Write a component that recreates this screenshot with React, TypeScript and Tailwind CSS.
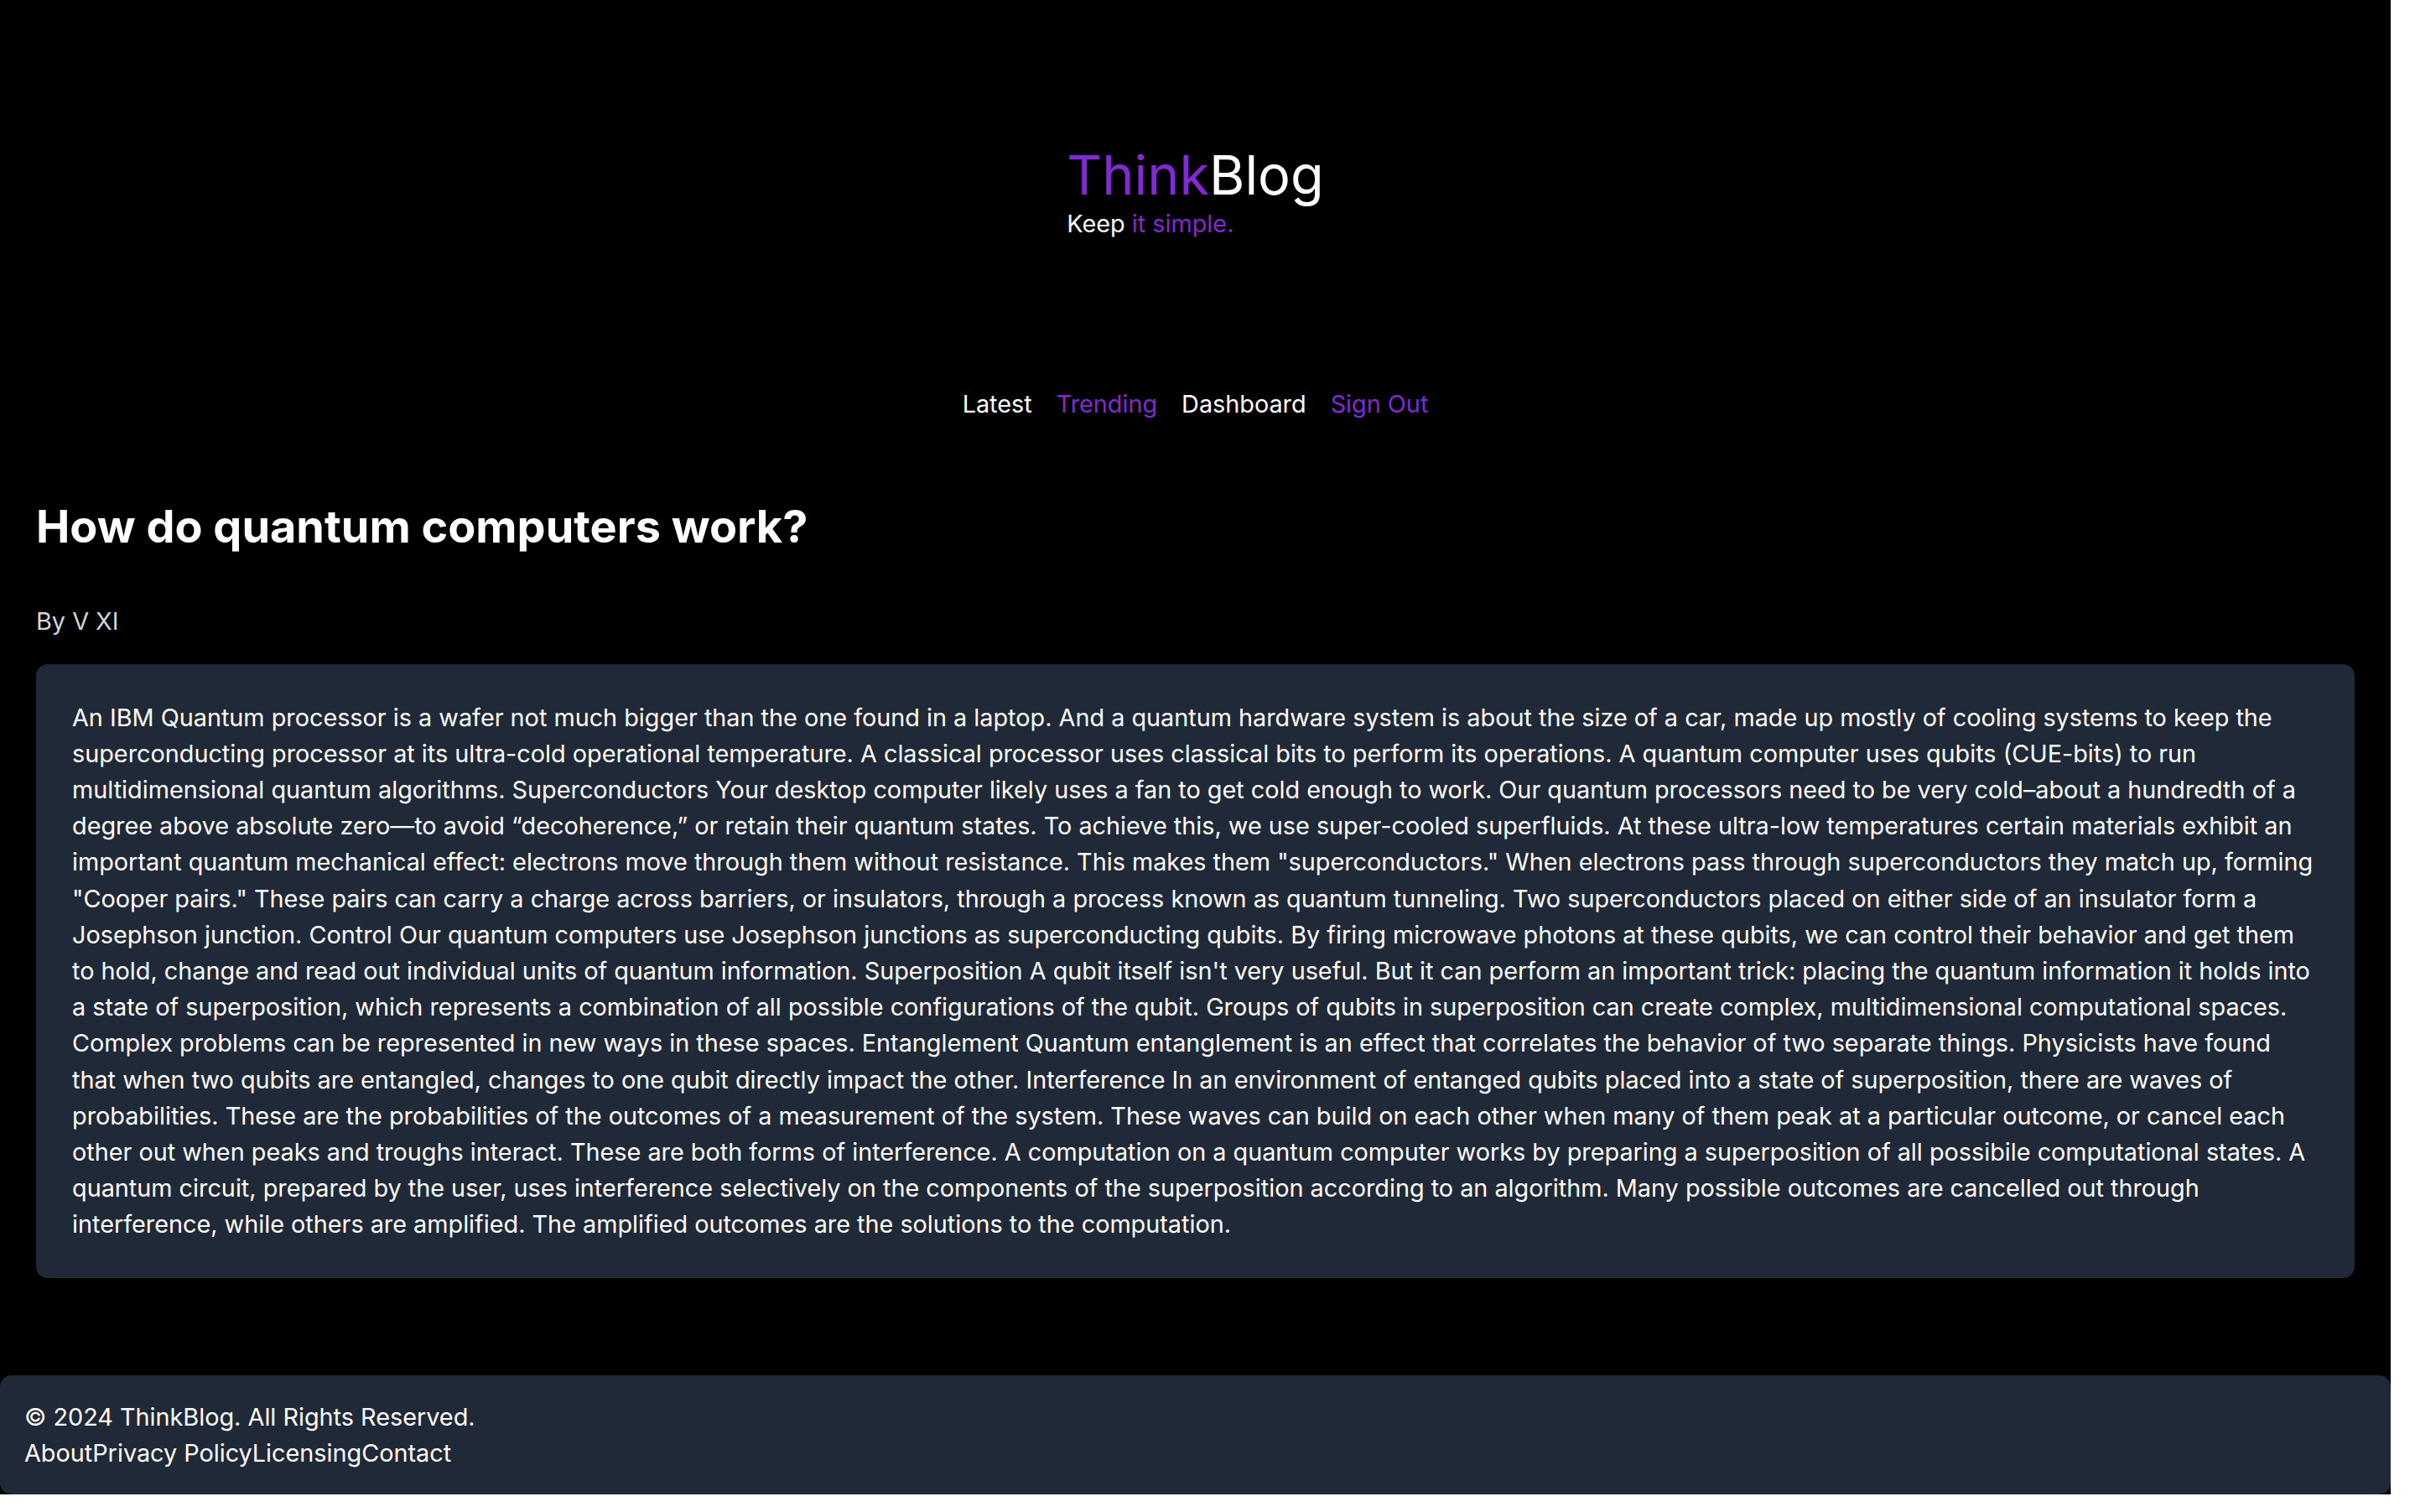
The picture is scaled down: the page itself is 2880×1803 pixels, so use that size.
const ARTICLE = `An IBM Quantum processor is a wafer not much bigger than the one found in a laptop. And a quantum hardware system is about the size of a car, made up mostly of cooling systems to keep the superconducting processor at its ultra-cold operational temperature. A classical processor uses classical bits to perform its operations. A quantum computer uses qubits (CUE-bits) to run multidimensional quantum algorithms. Superconductors Your desktop computer likely uses a fan to get cold enough to work. Our quantum processors need to be very cold–about a hundredth of a degree above absolute zero—to avoid “decoherence,” or retain their quantum states. To achieve this, we use super-cooled superfluids. At these ultra-low temperatures certain materials exhibit an important quantum mechanical effect: electrons move through them without resistance. This makes them "superconductors." When electrons pass through superconductors they match up, forming "Cooper pairs." These pairs can carry a charge across barriers, or insulators, through a process known as quantum tunneling. Two superconductors placed on either side of an insulator form a Josephson junction. Control Our quantum computers use Josephson junctions as superconducting qubits. By firing microwave photons at these qubits, we can control their behavior and get them to hold, change and read out individual units of quantum information. Superposition A qubit itself isn't very useful. But it can perform an important trick: placing the quantum information it holds into a state of superposition, which represents a combination of all possible configurations of the qubit. Groups of qubits in superposition can create complex, multidimensional computational spaces. Complex problems can be represented in new ways in these spaces. Entanglement Quantum entanglement is an effect that correlates the behavior of two separate things. Physicists have found that when two qubits are entangled, changes to one qubit directly impact the other. Interference In an environment of entanged qubits placed into a state of superposition, there are waves of probabilities. These are the probabilities of the outcomes of a measurement of the system. These waves can build on each other when many of them peak at a particular outcome, or cancel each other out when peaks and troughs interact. These are both forms of interference. A computation on a quantum computer works by preparing a superposition of all possibile computational states. A quantum circuit, prepared by the user, uses interference selectively on the components of the superposition according to an algorithm. Many possible outcomes are cancelled out through interference, while others are amplified. The amplified outcomes are the solutions to the computation.`;

const navLinks = [
  { label: 'Latest', accent: false },
  { label: 'Trending', accent: true },
  { label: 'Dashboard', accent: false },
  { label: 'Sign Out', accent: true },
];

const footerLinks = ['About', 'Privacy Policy', 'Licensing', 'Contact'];

const App = () => {
  return (
    <div className="min-h-screen bg-white font-['Inter',sans-serif]">
      <div className="mr-[29px] bg-black text-white">
        {/* Header */}
        <header className="flex flex-col items-center pt-[173px]">
          <div className="flex flex-col items-start">
            <h1 className="text-[64.8px] leading-[72px] font-normal">
              <span className="text-[#8129d3]">Think</span>
              <span className="text-white">Blog</span>
            </h1>
            <p className="text-[28.8px] leading-[43.2px]">
              Keep <span className="text-[#8129d3]">it simple.</span>
            </p>
          </div>
          <nav className="mt-[172px] flex gap-[29px] text-[28.8px] leading-[43.2px]">
            {navLinks.map((link) => (
              <a
                key={link.label}
                href="#"
                className={link.accent ? 'text-[#8129d3]' : 'text-white'}
              >
                {link.label}
              </a>
            ))}
          </nav>
        </header>

        {/* Article */}
        <main className="px-[43px] pt-[92px] pb-[116px]">
          <h2 className="text-[54px] leading-[65px] font-bold">
            How do quantum computers work?
          </h2>
          <p className="mt-[59px] text-[28.8px] leading-[43.2px] text-[#d1d5db]">
            By V XI
          </p>
          <div className="mt-[29px] rounded-[14px] bg-[#1f2937] px-[43px] py-[42px]">
            <p className="text-[28.8px] leading-[43.2px] text-white">{ARTICLE}</p>
          </div>
        </main>

        {/* Footer */}
        <footer className="rounded-[14px] bg-[#1f2937] px-[29px] py-[28px] text-[28.8px] leading-[43.2px] text-white">
          <p>© 2024 ThinkBlog. All Rights Reserved.</p>
          <div className="flex">
            {footerLinks.map((l) => (
              <a key={l} href="#">
                {l}
              </a>
            ))}
          </div>
        </footer>
      </div>
    </div>
  );
};

export default App;
